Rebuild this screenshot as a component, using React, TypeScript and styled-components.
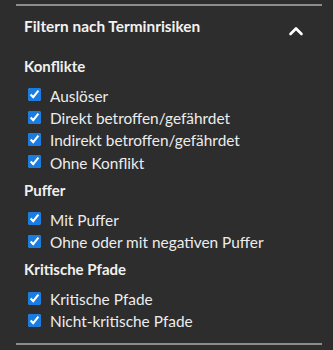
import React from "react";
import styled, { createGlobalStyle } from "styled-components";

const Global = createGlobalStyle`
  html, body { margin: 0; padding: 0; background: #2d2d2d; }
  body { font-family: Lato, "Noto Sans", sans-serif; }
`;

const Panel = styled.div`
  width: 333px;
  height: 350px;
  box-sizing: border-box;
  background: #2d2d2d;
  color: #f0f0f0;
  padding: 4px 11px 0 16px;
  display: flex;
  flex-direction: column;
`;

const Rule = styled.hr`
  margin: 0;
  border: none;
  height: 2px;
  background: #8c8c8c;
`;

const Header = styled.div`
  display: flex;
  align-items: flex-start;
  justify-content: space-between;
  margin-top: 10px;
  padding: 0 18px 0 8px;
`;

const Title = styled.div`
  font-size: 15.4px;
  line-height: 20px;
  font-weight: 700;
  color: #f2f2f2;
`;

const Chevron = styled.svg`
  width: 16px;
  height: 10px;
  margin-top: 10px;
`;

const Body = styled.div`
  padding: 20px 0 0 8px;
  display: flex;
  flex-direction: column;
`;

const Section = styled.div<{ $first?: boolean }>`
  margin-top: ${(p) => (p.$first ? 0 : 6)}px;
`;

const SectionTitle = styled.div`
  font-size: 15px;
  font-weight: 700;
  line-height: 20px;
  margin-bottom: 8.5px;
`;

const Row = styled.label`
  display: flex;
  align-items: center;
  height: 22.4px;
  padding-left: 4px;
  font-size: 15.4px;
  line-height: 22.4px;
  color: #ececec;
`;

const Box = styled.input`
  margin: 0 9px 0 0;
  width: 13px;
  height: 13px;
  position: relative;
  top: -1px;
  accent-color: #1a7ce0;
`;

const Bottom = styled(Rule)`
  margin-top: auto;
  margin-bottom: 5px;
`;

const sections = [
  { title: "Konflikte", items: ["Auslöser", "Direkt betroffen/gefährdet", "Indirekt betroffen/gefährdet", "Ohne Konflikt"] },
  { title: "Puffer", items: ["Mit Puffer", "Ohne oder mit negativen Puffer"] },
  { title: "Kritische Pfade", items: ["Kritische Pfade", "Nicht-kritische Pfade"] },
];

export default function App() {
  return (
    <>
      <Global />
      <Panel>
        <Rule />
        <Header>
          <Title>Filtern nach Terminrisiken</Title>
          <Chevron viewBox="0 0 16 10">
            <path d="M2.5 8 L8 2.5 L13.5 8" fill="none" stroke="#fff" strokeWidth="2.6" strokeLinecap="round" strokeLinejoin="round" />
          </Chevron>
        </Header>
        <Body>
          {sections.map((s, idx) => (
            <Section key={s.title} $first={idx === 0}>
              <SectionTitle>{s.title}</SectionTitle>
              {s.items.map((i) => (
                <Row key={i}>
                  <Box type="checkbox" defaultChecked />
                  {i}
                </Row>
              ))}
            </Section>
          ))}
        </Body>
        <Bottom />
      </Panel>
    </>
  );
}
